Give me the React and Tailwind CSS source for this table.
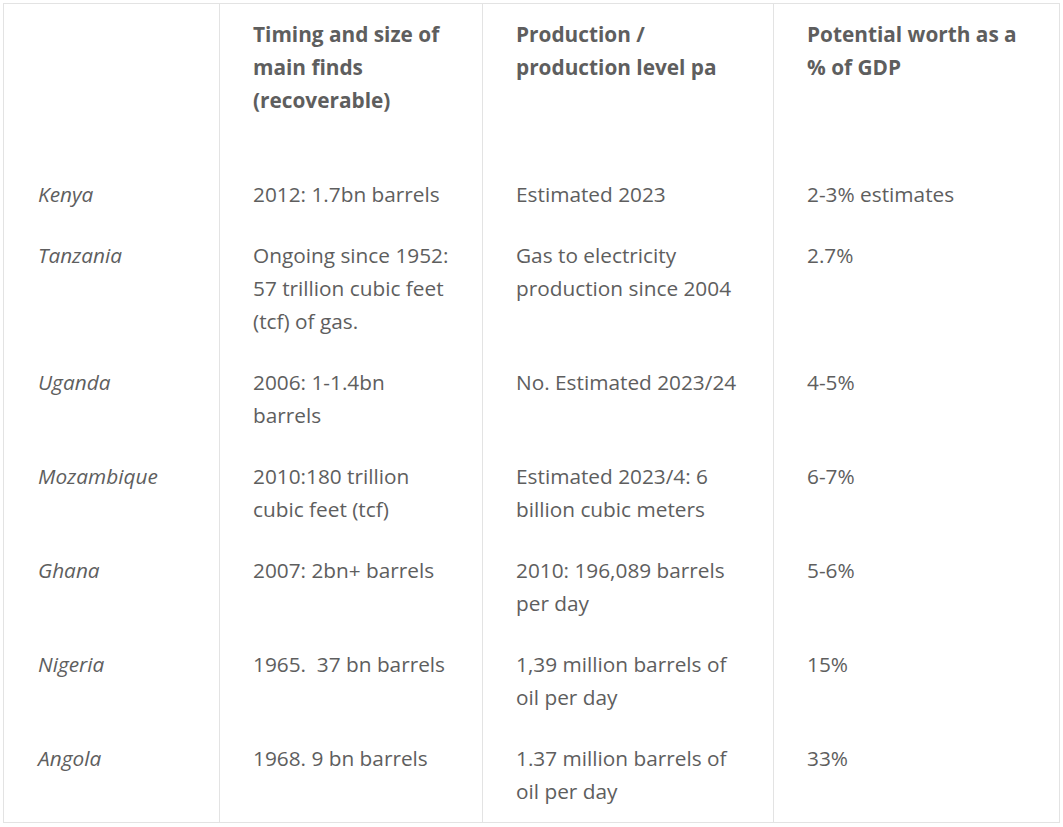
const rows = [
    { country: 'Kenya', finds: '2012: 1.7bn barrels', production: 'Estimated 2023', worth: '2-3% estimates' },
    { country: 'Tanzania', finds: 'Ongoing since 1952: 57 trillion cubic feet (tcf) of gas.', production: 'Gas to electricity production since 2004', worth: '2.7%' },
    { country: 'Uganda', finds: '2006: 1-1.4bn barrels', production: 'No. Estimated 2023/24', worth: '4-5%' },
    { country: 'Mozambique', finds: '2010:180 trillion cubic feet (tcf)', production: 'Estimated 2023/4: 6 billion cubic meters', worth: '6-7%' },
    { country: 'Ghana', finds: '2007: 2bn+ barrels', production: '2010: 196,089 barrels per day', worth: '5-6%' },
    { country: 'Nigeria', finds: '1965.\u00a0 37 bn barrels', production: '1,39 million barrels of oil per day', worth: '15%' },
    { country: 'Angola', finds: '1968. 9 bn barrels', production: '1.37 million barrels of oil per day', worth: '33%' },
];

export default function App() {
    const th = 'border-x border-[#e3e3e3] pl-[33px] pr-[30px] pt-[14px] pb-[47px] text-left align-top font-bold';
    const td = 'border-x border-[#e3e3e3] pl-[33px] pr-[30px] py-[14px] align-top';

    return (
        <div className="min-h-screen bg-white p-[3px]" style={{ fontFamily: '"Open Sans", sans-serif' }}>
            <table className="w-[1056px] table-fixed border-collapse border border-[#e3e3e3] text-[20.8px] leading-[33px] text-[#5e5e5e]">
                <colgroup>
                    <col className="w-[216px]" />
                    <col className="w-[263px]" />
                    <col className="w-[291px]" />
                    <col className="w-[286px]" />
                </colgroup>
                <thead>
                    <tr>
                        <th className={th + ' pl-[34px]'}></th>
                        <th className={th}>Timing and size of main finds (recoverable)</th>
                        <th className={th}>Production / production level pa</th>
                        <th className={th}>Potential worth as a % of GDP</th>
                    </tr>
                </thead>
                <tbody>
                    {rows.map((r) => (
                        <tr key={r.country}>
                            <td className="border-x border-[#e3e3e3] pl-[34px] pr-[30px] py-[14px] align-top italic">{r.country}</td>
                            <td className={td}>{r.finds}</td>
                            <td className={td}>{r.production}</td>
                            <td className={td}>{r.worth}</td>
                        </tr>
                    ))}
                </tbody>
            </table>
        </div>
    );
}
